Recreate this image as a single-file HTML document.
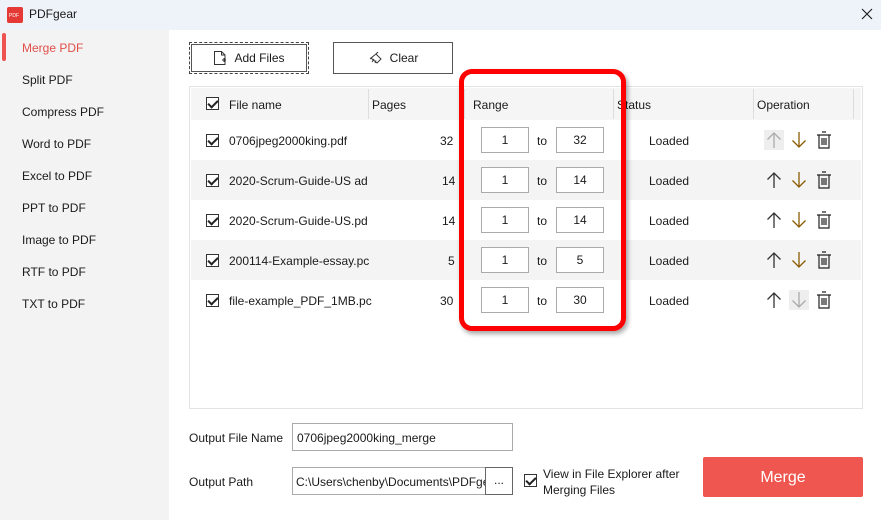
<!DOCTYPE html>
<html><head><meta charset="utf-8"><style>
*{box-sizing:border-box;margin:0;padding:0}
body{width:881px;height:520px;overflow:hidden;font-family:"Segoe UI","Liberation Sans",sans-serif;font-size:12px;color:#1a1a1a;background:#fff;position:relative}
.abs{position:absolute}
.title{left:0;top:0;width:881px;height:30px;background:#eef2f9}
.side{left:0;top:30px;width:169px;height:490px;background:#f3f3f3}
.nav{position:absolute;left:22px;font-size:12px}
.btn{position:absolute;border:1px solid #555;background:#fff;display:flex;align-items:center;justify-content:center;font-size:12px}
.tbl{left:189px;top:86px;width:674px;height:323px;border:1px solid #e3e3e3;background:#fff}
.row{position:absolute;left:1px;width:670px;height:40px}
.cb{position:absolute;width:13px;height:13px;border:1px solid #333;background:#fff}
.cb:after{content:"";position:absolute;left:3px;top:0px;width:4px;height:8px;border:solid #222;border-width:0 2px 2px 0;transform:rotate(45deg)}
.inp{position:absolute;width:48px;height:26px;border:1px solid #aaa;background:#fff;text-align:center;line-height:24px}
.cell{position:absolute}
.vd{position:absolute;top:2px;width:1px;height:30px;background:#ddd}
.r{position:absolute;left:0;width:881px;height:40px}
.ic{position:absolute;top:11px}
</style></head><body>
<div class="abs title"></div>
<svg class="abs" style="left:7px;top:7px" width="16" height="16"><rect width="16" height="16" rx="2" fill="#e53935"/><text x="2" y="10" font-size="5" fill="#fff" font-family="Liberation Sans">PDF</text></svg>
<div class="abs" style="left:29px;top:7px;font-size:12px">PDFgear</div>
<svg class="abs" style="left:861px;top:8px" width="12" height="12"><path d="M1 1L11 11M11 1L1 11" stroke="#222" stroke-width="1.2"/></svg>
<div class="abs side"></div>
<div class="abs" style="left:2px;top:33px;width:4px;height:28px;background:#ef5350;border-radius:2px"></div>
<div class="nav" style="top:41px;color:#e0504a">Merge PDF</div>
<div class="nav" style="top:73px">Split PDF</div>
<div class="nav" style="top:105px">Compress PDF</div>
<div class="nav" style="top:137px">Word to PDF</div>
<div class="nav" style="top:169px">Excel to PDF</div>
<div class="nav" style="top:201px">PPT to PDF</div>
<div class="nav" style="top:233px">Image to PDF</div>
<div class="nav" style="top:265px">RTF to PDF</div>
<div class="nav" style="top:297px">TXT to PDF</div>

<div class="btn" style="left:189px;top:42px;width:120px;height:32px;border:1px dashed #444;outline:1px solid #555;outline-offset:-3px"><svg width="14" height="16" style="margin-right:7px"><path d="M1.5 1.5H8.5L12 5V14.5H1.5Z M8.5 1.5V5H12" fill="none" stroke="#333"/><path d="M9 10H13M11 8V12" stroke="#333"/></svg>Add Files</div>
<div class="btn" style="left:333px;top:42px;width:120px;height:32px"><svg width="16" height="14" style="margin-right:6px"><path d="M3 7L8 3L13 8L9 12Z M8 3L10 1M6 8L4 11M8 9.5L7 12M4.5 6L2 8" fill="none" stroke="#333"/></svg>Clear</div>

<div class="abs tbl">
 <div class="row" style="top:1px;height:32px;background:#f5f5f5"></div>
 <div class="cb" style="left:16px;top:10px"></div>
 <div class="cell" style="left:39px;top:11px">File name</div>
 <div class="vd" style="left:178px"></div><div class="cell" style="left:182px;top:11px">Pages</div>
 <div class="vd" style="left:274px"></div><div class="cell" style="left:283px;top:11px">Range</div>
 <div class="vd" style="left:423px"></div><div class="cell" style="left:427px;top:11px">Status</div>
 <div class="vd" style="left:563px"></div><div class="cell" style="left:567px;top:11px">Operation</div>
 <div class="vd" style="left:663px"></div>
 <div class="row" style="top:33px"></div>
 <div class="row" style="top:73px;background:#f4f4f4"></div>
 <div class="row" style="top:113px"></div>
 <div class="row" style="top:153px;background:#f4f4f4"></div>
 <div class="row" style="top:193px"></div>
</div>

<svg width="0" height="0" style="position:absolute"><defs>
<symbol id="up" viewBox="0 0 16 18"><path d="M8 2V17" stroke="currentColor" stroke-width="1.3"/><path d="M1.5 8.5L8 2L14.5 8.5" fill="none" stroke="currentColor" stroke-width="1.3"/></symbol>
<symbol id="dn" viewBox="0 0 16 18"><path d="M8 1V16" stroke="currentColor" stroke-width="1.3"/><path d="M1.5 9.5L8 16L14.5 9.5" fill="none" stroke="currentColor" stroke-width="1.3"/></symbol>
<symbol id="tr" viewBox="0 0 16 18"><path d="M6 1H10M1 4H15M3 4V17H13V4M6 7V14M8 7V14M10 7V14" fill="none" stroke="#222" stroke-width="1.2"/></symbol>
</defs></svg>

<div class="r" style="top:120px"><div class="cb" style="left:206px;top:14px"></div><div class="cell" style="left:229px;top:14px">0706jpeg2000king.pdf</div><div class="cell" style="left:440px;top:14px">32</div><div class="inp" style="left:481px;top:7px">1</div><div class="cell" style="left:537px;top:14px">to</div><div class="inp" style="left:556px;top:7px">32</div><div class="cell" style="left:649px;top:14px">Loaded</div><div class="abs" style="left:764px;top:10px;width:20px;height:20px;background:#eee"></div><svg class="ic" style="left:766px;color:#aaa" width="16" height="18"><use href="#up"/></svg><svg class="ic" style="left:791px;color:#8a5a00" width="16" height="18"><use href="#dn"/></svg><svg class="ic" style="left:816px" width="16" height="18"><use href="#tr"/></svg></div>
<div class="r" style="top:160px"><div class="cb" style="left:206px;top:14px"></div><div class="cell" style="left:229px;top:14px">2020-Scrum-Guide-US ad</div><div class="cell" style="left:442px;top:14px">14</div><div class="inp" style="left:481px;top:7px">1</div><div class="cell" style="left:537px;top:14px">to</div><div class="inp" style="left:556px;top:7px">14</div><div class="cell" style="left:649px;top:14px">Loaded</div><svg class="ic" style="left:766px;color:#333" width="16" height="18"><use href="#up"/></svg><svg class="ic" style="left:791px;color:#8a5a00" width="16" height="18"><use href="#dn"/></svg><svg class="ic" style="left:816px" width="16" height="18"><use href="#tr"/></svg></div>
<div class="r" style="top:200px"><div class="cb" style="left:206px;top:14px"></div><div class="cell" style="left:229px;top:14px">2020-Scrum-Guide-US.pd</div><div class="cell" style="left:442px;top:14px">14</div><div class="inp" style="left:481px;top:7px">1</div><div class="cell" style="left:537px;top:14px">to</div><div class="inp" style="left:556px;top:7px">14</div><div class="cell" style="left:649px;top:14px">Loaded</div><svg class="ic" style="left:766px;color:#333" width="16" height="18"><use href="#up"/></svg><svg class="ic" style="left:791px;color:#8a5a00" width="16" height="18"><use href="#dn"/></svg><svg class="ic" style="left:816px" width="16" height="18"><use href="#tr"/></svg></div>
<div class="r" style="top:240px"><div class="cb" style="left:206px;top:14px"></div><div class="cell" style="left:229px;top:14px">200114-Example-essay.pc</div><div class="cell" style="left:448px;top:14px">5</div><div class="inp" style="left:481px;top:7px">1</div><div class="cell" style="left:537px;top:14px">to</div><div class="inp" style="left:556px;top:7px">5</div><div class="cell" style="left:649px;top:14px">Loaded</div><svg class="ic" style="left:766px;color:#333" width="16" height="18"><use href="#up"/></svg><svg class="ic" style="left:791px;color:#8a5a00" width="16" height="18"><use href="#dn"/></svg><svg class="ic" style="left:816px" width="16" height="18"><use href="#tr"/></svg></div>
<div class="r" style="top:280px"><div class="cb" style="left:206px;top:14px"></div><div class="cell" style="left:229px;top:14px">file-example_PDF_1MB.pc</div><div class="cell" style="left:440px;top:14px">30</div><div class="inp" style="left:481px;top:7px">1</div><div class="cell" style="left:537px;top:14px">to</div><div class="inp" style="left:556px;top:7px">30</div><div class="cell" style="left:649px;top:14px">Loaded</div><svg class="ic" style="left:766px;color:#333" width="16" height="18"><use href="#up"/></svg><div class="abs" style="left:789px;top:10px;width:20px;height:20px;background:#eee"></div><svg class="ic" style="left:791px;color:#aaa" width="16" height="18"><use href="#dn"/></svg><svg class="ic" style="left:816px" width="16" height="18"><use href="#tr"/></svg></div>

<div class="abs" style="left:459px;top:69px;width:167px;height:262px;border:5px solid #f00;border-radius:13px;box-shadow:2px 3px 5px rgba(0,0,0,.35)"></div>

<div class="cell" style="left:189px;top:431px">Output File Name</div>
<div class="abs" style="left:292px;top:423px;width:221px;height:28px;border:1px solid #aaa;padding:7px 4px">0706jpeg2000king_merge</div>
<div class="cell" style="left:189px;top:475px">Output Path</div>
<div class="abs" style="left:292px;top:467px;width:194px;height:28px;border:1px solid #aaa;padding:7px 3px;overflow:hidden;white-space:nowrap">C:\Users\chenby\Documents\PDFgear</div>
<div class="abs" style="left:485px;top:467px;width:28px;height:28px;border:1px solid #666;text-align:center;line-height:24px">...</div>
<div class="cb" style="left:524px;top:474px"></div>
<div class="cell" style="left:543px;top:466px;line-height:16px">View in File Explorer after<br>Merging Files</div>
<div class="abs" style="left:703px;top:457px;width:160px;height:40px;background:#f05650;border-radius:2px;color:#fff;font-size:16px;text-align:center;line-height:42px">Merge</div>
</body></html>
